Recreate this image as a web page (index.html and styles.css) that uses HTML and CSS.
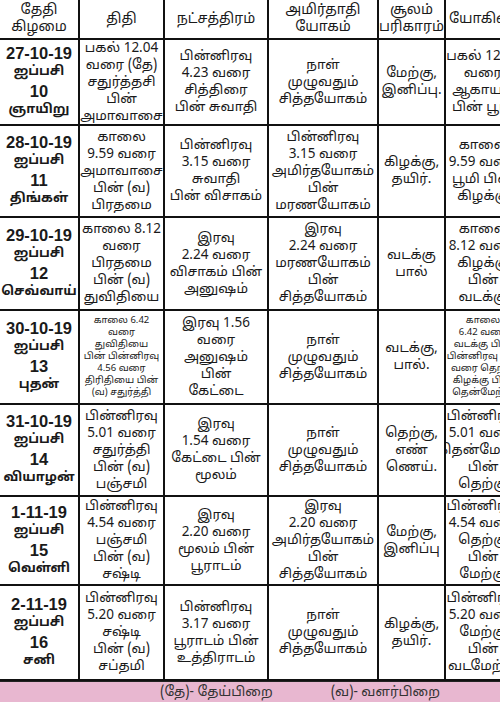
FILE: index.html
```html
<!DOCTYPE html>
<html lang="ta">
<head>
<meta charset="utf-8">
<link rel="stylesheet" href="styles.css">
</head>
<body>
<div class="page">
  <div class="grid">
    <div class="cell head">தேதி<br>கிழமை</div>
    <div class="cell head">திதி</div>
    <div class="cell head">நட்சத்திரம்</div>
    <div class="cell head">அமிர்தாதி<br>யோகம்</div>
    <div class="cell head">சூலம்<br>பரிகாரம்</div>
    <div class="cell head">யோகினி</div>

    <div class="cell date"><span>27-10-19</span><span class="ta">ஐப்பசி</span><span>10</span><span class="ta">ஞாயிறு</span></div>
    <div class="cell">பகல் 12.04<br>வரை (தே)<br>சதுர்த்தசி<br>பின்<br>அமாவாசை</div>
    <div class="cell">பின்னிரவு<br>4.23 வரை<br>சித்திரை<br>பின் சுவாதி</div>
    <div class="cell">நாள்<br>முழுவதும்<br>சித்தயோகம்</div>
    <div class="cell">மேற்கு,<br>இனிப்பு.</div>
    <div class="cell">பகல் 12.04<br>வரை<br>ஆகாயம்<br>பின் பூமி</div>

    <div class="cell date"><span>28-10-19</span><span class="ta">ஐப்பசி</span><span>11</span><span class="ta">திங்கள்</span></div>
    <div class="cell">காலை<br>9.59 வரை<br>அமாவாசை<br>பின் (வ)<br>பிரதமை</div>
    <div class="cell">பின்னிரவு<br>3.15 வரை<br>சுவாதி<br>பின் விசாகம்</div>
    <div class="cell">பின்னிரவு<br>3.15 வரை<br>அமிர்தயோகம்<br>பின்<br>மரணயோகம்</div>
    <div class="cell">கிழக்கு,<br>தயிர்.</div>
    <div class="cell">காலை<br>9.59 வரை<br>பூமி பின்<br>கிழக்கு</div>

    <div class="cell date"><span>29-10-19</span><span class="ta">ஐப்பசி</span><span>12</span><span class="ta">செவ்வாய்</span></div>
    <div class="cell">காலை 8.12<br>வரை<br>பிரதமை<br>பின் (வ)<br>துவிதியை</div>
    <div class="cell">இரவு<br>2.24 வரை<br>விசாகம் பின்<br>அனுஷம்</div>
    <div class="cell">இரவு<br>2.24 வரை<br>மரணயோகம்<br>பின்<br>சித்தயோகம்</div>
    <div class="cell">வடக்கு<br>பால்</div>
    <div class="cell">காலை<br>8.12 வரை<br>கிழக்கு<br>பின்<br>வடக்கு</div>

    <div class="cell date"><span>30-10-19</span><span class="ta">ஐப்பசி</span><span>13</span><span class="ta">புதன்</span></div>
    <div class="cell small">காலை 6.42<br>வரை<br>துவிதியை<br>பின் பின்னிரவு<br>4.56 வரை<br>திரிதியை பின்<br>(வ) சதுர்த்தி</div>
    <div class="cell">இரவு 1.56<br>வரை<br>அனுஷம்<br>பின்<br>கேட்டை</div>
    <div class="cell">நாள்<br>முழுவதும்<br>சித்தயோகம்</div>
    <div class="cell">வடக்கு,<br>பால்.</div>
    <div class="cell small">காலை<br>6.42 வரை<br>வடக்கு பின்<br>பின்னிரவு 4.56<br>வரை தெற்கு<br>கிழக்கு பின்<br>தென்மேற்கு</div>

    <div class="cell date"><span>31-10-19</span><span class="ta">ஐப்பசி</span><span>14</span><span class="ta">வியாழன்</span></div>
    <div class="cell">பின்னிரவு<br>5.01 வரை<br>சதுர்த்தி<br>பின் (வ)<br>பஞ்சமி</div>
    <div class="cell">இரவு<br>1.54 வரை<br>கேட்டை பின்<br>மூலம்</div>
    <div class="cell">நாள்<br>முழுவதும்<br>சித்தயோகம்</div>
    <div class="cell">தெற்கு,<br>எண்<br>ணெய்.</div>
    <div class="cell">பின்னிரவு<br>5.01 வரை<br>தென்மேற்கு<br>பின்<br>தெற்கு</div>

    <div class="cell date"><span>1-11-19</span><span class="ta">ஐப்பசி</span><span>15</span><span class="ta">வெள்ளி</span></div>
    <div class="cell">பின்னிரவு<br>4.54 வரை<br>பஞ்சமி<br>பின் (வ)<br>சஷ்டி</div>
    <div class="cell">இரவு<br>2.20 வரை<br>மூலம் பின்<br>பூராடம்</div>
    <div class="cell">இரவு<br>2.20 வரை<br>அமிர்தயோகம்<br>பின்<br>சித்தயோகம்</div>
    <div class="cell">மேற்கு,<br>இனிப்பு</div>
    <div class="cell">பின்னிரவு<br>4.54 வரை<br>தெற்கு<br>பின்<br>மேற்கு</div>

    <div class="cell date"><span>2-11-19</span><span class="ta">ஐப்பசி</span><span>16</span><span class="ta">சனி</span></div>
    <div class="cell">பின்னிரவு<br>5.20 வரை<br>சஷ்டி<br>பின் (வ)<br>சப்தமி</div>
    <div class="cell">பின்னிரவு<br>3.17 வரை<br>பூராடம் பின்<br>உத்திராடம்</div>
    <div class="cell">நாள்<br>முழுவதும்<br>சித்தயோகம்</div>
    <div class="cell">கிழக்கு,<br>தயிர்.</div>
    <div class="cell">பின்னிரவு<br>5.20 வரை<br>மேற்கு<br>பின்<br>வடமேற்கு</div>
  </div>
  <div class="legend"><span>(தே)- தேய்பிறை</span><span>(வ)- வளர்பிறை</span></div>
</div>
</body>
</html>
```
FILE: styles.css
```css
html, body {
  margin: 0;
  padding: 0;
  background: #ffffff;
  overflow: hidden;
}
.page {
  width: 500px;
  height: 702px;
  overflow: hidden;
  display: flex;
  flex-direction: column;
  font-family: "Noto Sans Tamil", "Lohit Tamil", "Latha", "Liberation Sans", sans-serif;
  color: #1a1a1a;
}
.grid {
  display: grid;
  grid-template-columns: 78px 83px 102px 108px 65px 74px;
  grid-template-rows: 38px 84px 90px 91px 92px 90px 87px 93px;
  gap: 2px;
  background: #111111;
  width: 522px;
  padding-bottom: 2px;
}
.cell {
  background: #ffffff;
  display: flex;
  align-items: center;
  justify-content: center;
  text-align: center;
  font-size: 13.5px;
  line-height: 17px;
  overflow: hidden;
  white-space: nowrap;
}
.head {
  font-size: 14px;
  line-height: 17px;
}
.date {
  flex-direction: column;
  font-family: "Liberation Sans", "Noto Sans Tamil", sans-serif;
  font-weight: bold;
  font-size: 16.5px;
  line-height: 19px;
}
.date .ta {
  font-family: "Noto Sans Tamil", "Liberation Sans", sans-serif;
  font-size: 13px;
}
.small {
  font-size: 9.5px;
  line-height: 12px;
}
.legend {
  flex: 1;
  background: #e8b7d0;
  display: flex;
  gap: 58px;
  justify-content: center;
  align-items: center;
  padding-left: 100px;
  font-size: 13.5px;
  color: #333;
  border-top: 1px solid #222;
}
```
